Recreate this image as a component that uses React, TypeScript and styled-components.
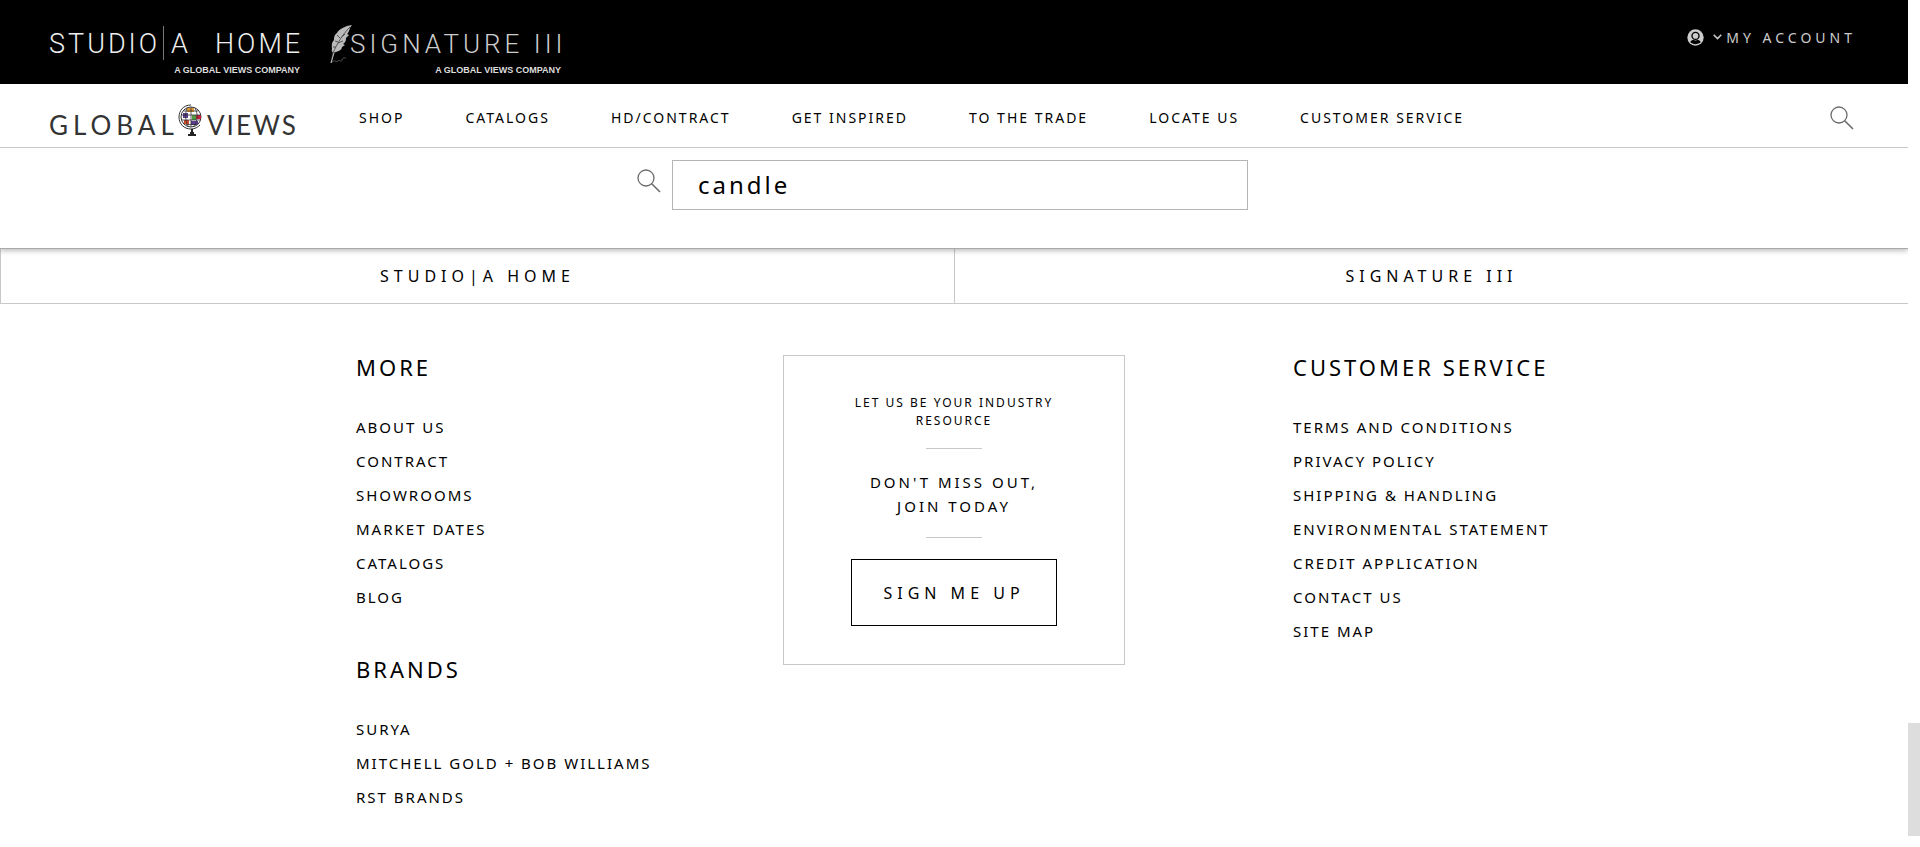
import React from "react";
import styled, { createGlobalStyle } from "styled-components";

const GlobalStyle = createGlobalStyle`
  * { box-sizing: border-box; }
  body {
    margin: 0;
    background: #fff;
    color: #000;
    font-family: "Noto Sans", "Liberation Sans", sans-serif;
  }
  a { color: inherit; text-decoration: none; }
  ul { list-style: none; margin: 0; padding: 0; }
  h2, p { margin: 0; font-weight: 400; }
  svg { display: block; overflow: visible; }
`;

const Shell = styled.div`
  display: flex;
  min-height: 100vh;
`;

const Page = styled.div`
  flex: 1;
  min-width: 0;
  overflow: clip;
`;

const ScrollTrack = styled.div`
  display: flex;
  flex-direction: column;
  justify-content: flex-end;
  width: 12px;
  padding-bottom: 11px;
`;

const ScrollThumb = styled.div`
  height: 113px;
  background: #ddd;
`;

const BrandBar = styled.header`
  display: flex;
  justify-content: space-between;
  align-items: flex-start;
  height: 84px;
  padding: 20px 52px 0 50px;
  background: #000;
  color: #ccc;
`;

const BrandLogos = styled.div`
  display: flex;
  gap: 26px;
`;

const AccountButton = styled.button`
  display: flex;
  align-items: center;
  height: 34px;
  padding: 0;
  border: 0;
  background: none;
  color: #ccc;
  font: inherit;
  font-size: 14px;
  letter-spacing: 4px;

  svg:first-child { margin-right: 9px; }
  svg + svg { margin-right: 4px; }
`;

const NavBar = styled.div`
  position: relative;
  z-index: 1;
  display: flex;
  align-items: center;
  height: 64px;
  padding: 4px 54px 0 50px;
  border-bottom: 1px solid #c8c8c8;
  background: #fff;
`;

const NavLinks = styled.nav`
  display: flex;
  flex: 1;
  gap: 61px;
  margin-left: 60px;
  font-size: 14px;
  letter-spacing: 2px;
  white-space: nowrap;
`;

const IconButton = styled.button`
  padding: 0;
  border: 0;
  background: none;
`;

const SearchPanel = styled.form`
  position: relative;
  display: flex;
  justify-content: center;
  align-items: flex-start;
  gap: 11px;
  height: 101px;
  padding: 12px 23px 0 0;
  border-bottom: 1px solid #a9a9a9;
  background: #fff;
  box-shadow: 0 2px 5px rgba(0, 0, 0, 0.25);

  ${IconButton} { margin-top: 9px; }
`;

const SearchInput = styled.input`
  width: 576px;
  height: 50px;
  padding: 0 25px 2px;
  border: 1px solid #b5b5b5;
  border-radius: 0;
  outline: 0;
  color: #000;
  font: inherit;
  font-size: 24px;
  letter-spacing: 3px;
`;

const BrandTabs = styled.nav`
  display: grid;
  grid-template-columns: 1fr 1fr;
  border-bottom: 1px solid #c8c8c8;
`;

const BrandTab = styled.a`
  border-left: 1px solid #c8c8c8;
  font-size: 16px;
  line-height: 54px;
  letter-spacing: 5px;
  text-align: center;
`;

const Footer = styled.footer`
  display: grid;
  grid-template-columns: minmax(0, 1fr) 342px minmax(0, 1fr);
  column-gap: 168px;
  align-items: start;
  max-width: 1196px;
  margin: 0 auto;
  padding-top: 51px;
`;

const FooterColumn = styled.div`
  display: grid;
  gap: 43px;
`;

const FooterHeading = styled.h2`
  margin-bottom: 31px;
  font-size: 22px;
  line-height: 24px;
  letter-spacing: 3px;
  white-space: nowrap;
`;

const FooterLink = styled.li`
  font-size: 15px;
  line-height: 34px;
  letter-spacing: 2px;
  white-space: nowrap;
`;

const SignUpCard = styled.section`
  padding: 38px 67px;
  border: 1px solid #c8c8c8;
  text-align: center;
`;

const CardIntro = styled.p`
  font-size: 12px;
  line-height: 18px;
  letter-spacing: 2px;
`;

const CardPitch = styled.p`
  margin-bottom: 19px;
  font-size: 15px;
  line-height: 24px;
  letter-spacing: 3px;
  white-space: nowrap;
`;

const CardRule = styled.hr`
  width: 56px;
  height: 1px;
  margin: 18px auto 21px;
  border: 0;
  background: #c8c8c8;
`;

const SignUpButton = styled.button`
  width: 100%;
  height: 67px;
  padding: 0;
  border: 1px solid #000;
  background: #fff;
  color: #000;
  font: inherit;
  font-size: 16px;
  letter-spacing: 5px;
`;

const Tagline = ({ right }: { right: number }) => (
  <text x={right} y="53" textAnchor="end" fontFamily="Liberation Sans, sans-serif" fontWeight="700" fontSize="9" fill="#ddd">
    A GLOBAL VIEWS COMPANY
  </text>
);

const StudioLogo = () => (
  <svg width="252" height="58" viewBox="0 0 252 58" aria-hidden="true">
    <g fontFamily="Roboto, sans-serif" fontWeight="300" fontSize="27" fill="#eee">
      <text x="-1" y="33" letterSpacing="3">STUDIO</text>
      <text x="121" y="33">A</text>
      <text x="165" y="33" letterSpacing="3">HOME</text>
    </g>
    <path d="M113.500 6V40" stroke="#777" />
    <Tagline right={250} />
  </svg>
);

const SignatureLogo = () => (
  <svg width="240" height="58" viewBox="0 0 240 58" aria-hidden="true">
    <path
      d="M24 5C17 6 11 9 9 13C6 15 6 18 6 20C3 23 4 26 4 29C3 31 5 32 5 33L8 32C12 31 14 29 14 27L17 25L15 24C18 22 18 20 18 18L21 15L19 14C22 11 21 8 24 5Z"
      fill="#bbb"
    />
    <path d="M22 7C14 15 9 24 5 33L3 43M9 15L12 18M7 21L10 22M5 27L8 27M17 14L13 18M15 21L10 23" fill="none" stroke="#555" />
    <path d="M6 33L3 43" stroke="#bbb" />
    <path d="M4 42C7 39 8 43 10 41S13 43 14 40S16 38 18 38" fill="none" stroke="#555" />
    <text x="22" y="33" letterSpacing="4" fontFamily="Roboto, sans-serif" fontWeight="300" fontSize="26" fill="#ccc">
      SIGNATURE III
    </text>
    <Tagline right={233} />
  </svg>
);

const GlobalViewsLogo = () => (
  <svg width="249" height="39" viewBox="0 -3 249 39" aria-hidden="true">
    <g fontFamily="Lato, sans-serif" fontSize="26" fill="#333">
      <text x="-1" y="34" letterSpacing="5">GLOBAL</text>
      <text x="157" y="34" letterSpacing="2">VIEWS</text>
    </g>
    <g transform="translate(0 2)">
      <circle cx="141" cy="14" r="10" fill="#fff" stroke="#333" />
      <path d="M137 5H144V9H137Z" fill="#e39a35" />
      <path d="M133 10H138V15H133Z" fill="#5b3d94" />
      <path d="M142 12H146V17H142Z" fill="#4f9a43" />
      <path d="M146 12H151V16H146Z" fill="#c8203c" />
      <path d="M134 17H139V21H134Z" fill="#cf4a2a" />
      <path d="M141 18H148V22H141Z" fill="#5b3d94" />
      <path
        d="M131.500 12H151M132 17H150M134 8H148M136 21.500H147M137 5C135 11 135 17 138 23M141 4V24M145 5C148 11 148 17 144 23"
        fill="none"
        stroke="#333"
        strokeWidth="0.800"
      />
      <path d="M141 2C133 2 129 8 129 14C129 21 134 26 141 26C145 26 148 24 150 22" fill="none" stroke="#333" />
      <path d="M142 26V31M138 32H146M140 30H144" stroke="#222" strokeWidth="2" />
    </g>
  </svg>
);

const SearchIcon = () => (
  <svg width="24" height="24" viewBox="0 0 24 24" fill="none" stroke="#6b6b6b" aria-hidden="true">
    <circle cx="9" cy="9" r="8" strokeWidth="1.300" />
    <path d="M14.700 14.700L23 23" strokeWidth="1.600" />
  </svg>
);

const UserIcon = () => (
  <svg width="17" height="17" viewBox="0 0 16 16" aria-hidden="true">
    <circle cx="8" cy="8" r="7.700" fill="#ccc" />
    <path d="M3 12.300C4 10.600 5.500 10.300 6 10.200C7.300 10.900 8.700 10.900 10 10.200C10.500 10.300 12 10.600 13 12.300C10.300 15 5.700 15 3 12.300Z" fill="#000" />
    <circle cx="8" cy="6.500" r="3.300" fill="#ccc" stroke="#000" strokeWidth="1.300" />
  </svg>
);

const ChevronIcon = () => (
  <svg width="9" height="6" viewBox="0 0 9 6" fill="none" stroke="#ccc" strokeWidth="1.500" aria-hidden="true">
    <path d="M.7 .8L4.500 4.600L8.300 .8" />
  </svg>
);

const navItems = ["SHOP", "CATALOGS", "HD/CONTRACT", "GET INSPIRED", "TO THE TRADE", "LOCATE US", "CUSTOMER SERVICE"];
const moreLinks = ["ABOUT US", "CONTRACT", "SHOWROOMS", "MARKET DATES", "CATALOGS", "BLOG"];
const brandLinks = ["SURYA", "MITCHELL GOLD + BOB WILLIAMS", "RST BRANDS"];
const serviceLinks = [
  "TERMS AND CONDITIONS",
  "PRIVACY POLICY",
  "SHIPPING & HANDLING",
  "ENVIRONMENTAL STATEMENT",
  "CREDIT APPLICATION",
  "CONTACT US",
  "SITE MAP",
];

const LinkGroup = ({ title, links }: { title: string; links: string[] }) => (
  <section>
    <FooterHeading>{title}</FooterHeading>
    <ul>
      {links.map((label) => (
        <FooterLink key={label}>
          <a href="#">{label}</a>
        </FooterLink>
      ))}
    </ul>
  </section>
);

export default function App() {
  return (
    <Shell>
      <GlobalStyle />
      <Page>
        <BrandBar>
          <BrandLogos>
            <a href="#" aria-label="Studio A Home"><StudioLogo /></a>
            <a href="#" aria-label="Signature III"><SignatureLogo /></a>
          </BrandLogos>
          <AccountButton type="button">
            <UserIcon />
            <ChevronIcon />
            MY ACCOUNT
          </AccountButton>
        </BrandBar>
        <NavBar>
          <a href="#" aria-label="Global Views"><GlobalViewsLogo /></a>
          <NavLinks>
            {navItems.map((label) => (
              <a key={label} href="#">{label}</a>
            ))}
          </NavLinks>
          <IconButton type="button" aria-label="Toggle search"><SearchIcon /></IconButton>
        </NavBar>
        <SearchPanel onSubmit={(event) => event.preventDefault()}>
          <IconButton type="submit" aria-label="Search"><SearchIcon /></IconButton>
          <SearchInput type="text" aria-label="Search products" defaultValue="candle" />
        </SearchPanel>
        <BrandTabs>
          <BrandTab href="#">STUDIO|A HOME</BrandTab>
          <BrandTab href="#">SIGNATURE III</BrandTab>
        </BrandTabs>
        <Footer>
          <FooterColumn>
            <LinkGroup title="MORE" links={moreLinks} />
            <LinkGroup title="BRANDS" links={brandLinks} />
          </FooterColumn>
          <SignUpCard>
            <CardIntro>LET US BE YOUR INDUSTRY RESOURCE</CardIntro>
            <CardRule />
            <CardPitch>DON'T MISS OUT,<br />JOIN TODAY</CardPitch>
            <CardRule />
            <SignUpButton type="button">SIGN ME UP</SignUpButton>
          </SignUpCard>
          <FooterColumn>
            <LinkGroup title="CUSTOMER SERVICE" links={serviceLinks} />
          </FooterColumn>
        </Footer>
      </Page>
      <ScrollTrack aria-hidden="true">
        <ScrollThumb />
      </ScrollTrack>
    </Shell>
  );
}
